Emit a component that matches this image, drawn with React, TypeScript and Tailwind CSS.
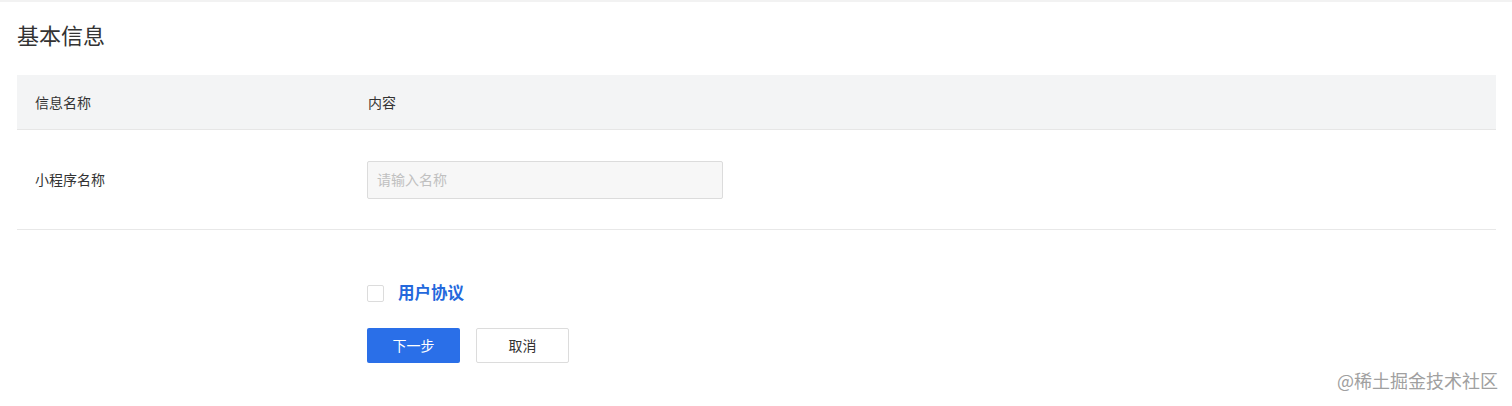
import React from "react";

export default function App() {
  const font = { fontFamily: '"Noto Sans CJK SC", "Noto Sans", sans-serif' };
  return (
    <div className="relative w-[1512px] h-[406px] bg-white overflow-hidden border-t-2 border-[#f2f2f2]" style={font}>
      <div className="pl-[17px] pr-[16px]">
        <h1 className="pt-[16px] h-[73px] text-[22px] leading-[32px] text-[#333]">基本信息</h1>
        <div className="flex h-[55px] items-center bg-[#f3f4f5] border-b border-[#e6e6e6] text-[14px] text-[#333]">
          <div className="w-[351px] pl-[18px]">信息名称</div>
          <div>内容</div>
        </div>
        <div className="flex h-[100px] items-center border-b border-[#e8e8e8] text-[14px] text-[#333]">
          <div className="w-[350px] pl-[18px]">小程序名称</div>
          <div className="w-[356px] h-[38px] border border-[#dcdcdc] rounded-[2px] bg-[#f7f7f7] flex items-center pl-[9px] text-[14px] text-[#c0c0c0]">
            请输入名称
          </div>
        </div>
        <div className="pl-[350px]">
          <div className="flex items-center mt-[54px] h-[18px]">
            <div className="w-[17px] h-[17px] border border-[#dcdcdc] rounded-[2px] bg-white" />
            <span className="ml-[14px] text-[16.5px] leading-[18px] font-bold text-[#2468dc] -mt-[2px]">用户协议</span>
          </div>
          <div className="flex mt-[26px] gap-[16px]">
            <button className="w-[93px] h-[35px] rounded-[2px] bg-[#2a6fe8] text-white text-[14px]">下一步</button>
            <button className="w-[93px] h-[35px] rounded-[2px] bg-white border border-[#dcdcdc] text-[#333] text-[14px]">取消</button>
          </div>
        </div>
      </div>
      <div className="absolute right-[14px] bottom-[12px] text-[18px] text-[#a0a0a0]">@稀土掘金技术社区</div>
    </div>
  );
}
